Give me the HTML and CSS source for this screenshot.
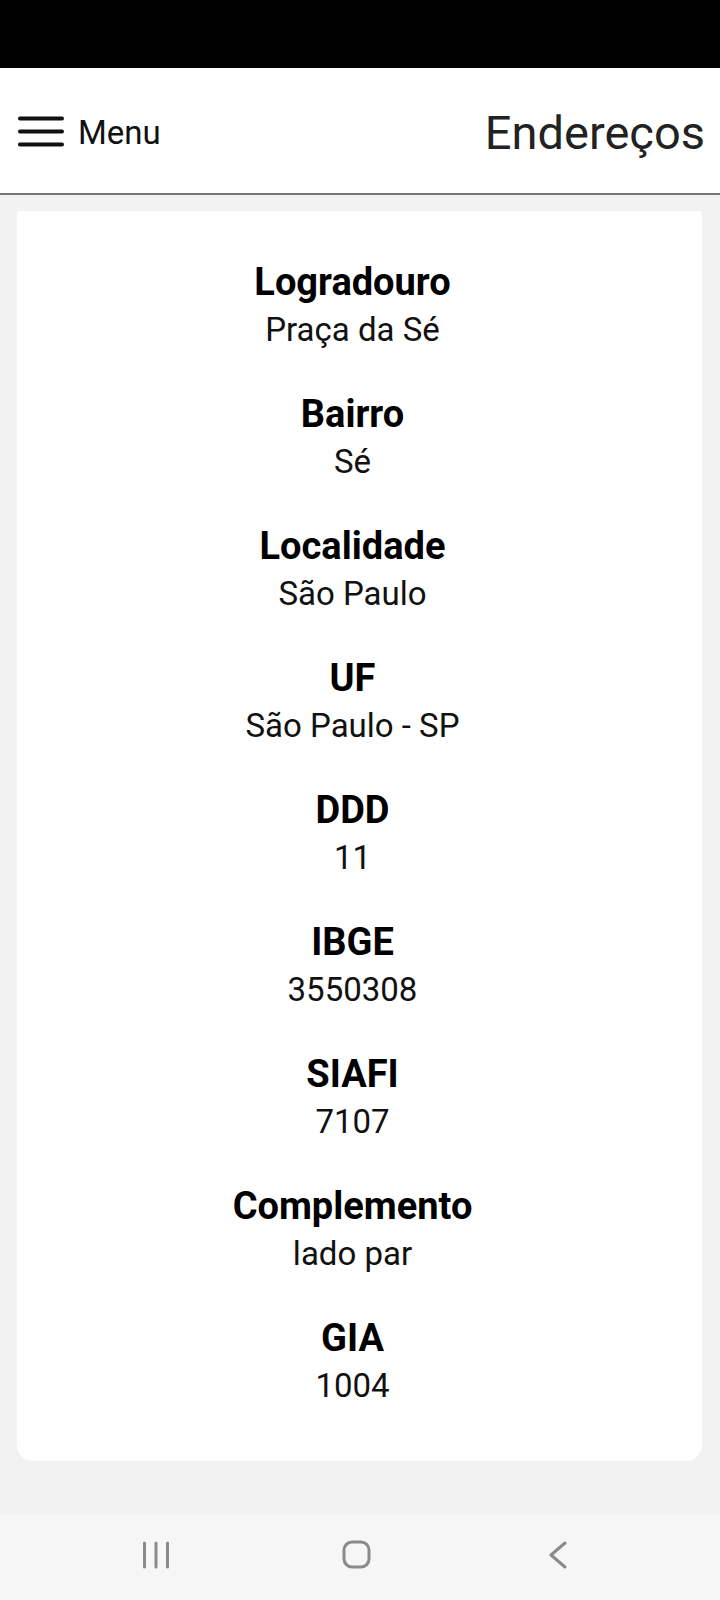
FILE: index.html
```html
<!DOCTYPE html>
<html lang="pt-BR">
<head>
<meta charset="utf-8">
<title>Endereços</title>
<link rel="stylesheet" href="styles.css">
</head>
<body>
<div class="screen">
  <div class="statusbar"></div>
  <header class="appbar">
    <div class="menu">
      <svg class="hamburger" width="46" height="31" viewBox="0 0 46 31">
        <g stroke="#111" stroke-width="3.8" stroke-linecap="round">
          <line x1="1.9" y1="2.5" x2="44.1" y2="2.5"/>
          <line x1="1.9" y1="15.5" x2="44.1" y2="15.5"/>
          <line x1="1.9" y1="28.5" x2="44.1" y2="28.5"/>
        </g>
      </svg>
      <span class="menu-label">Menu</span>
    </div>
    <h1 class="title">Endereços</h1>
  </header>
  <main class="content">
    <section class="card">
      <div class="field"><div class="label">Logradouro</div><div class="value">Praça da Sé</div></div>
      <div class="field"><div class="label">Bairro</div><div class="value">Sé</div></div>
      <div class="field"><div class="label">Localidade</div><div class="value">São Paulo</div></div>
      <div class="field"><div class="label">UF</div><div class="value">São Paulo - SP</div></div>
      <div class="field"><div class="label">DDD</div><div class="value">11</div></div>
      <div class="field"><div class="label">IBGE</div><div class="value">3550308</div></div>
      <div class="field"><div class="label">SIAFI</div><div class="value">7107</div></div>
      <div class="field"><div class="label">Complemento</div><div class="value">lado par</div></div>
      <div class="field"><div class="label">GIA</div><div class="value">1004</div></div>
    </section>
  </main>
  <nav class="navbar">
    <div class="nav-cell">
      <svg width="28" height="28" viewBox="0 0 28 28">
        <g stroke="#8a8a8a" stroke-width="3" stroke-linecap="round">
          <line x1="2.5" y1="2" x2="2.5" y2="26"/>
          <line x1="14" y1="2" x2="14" y2="26"/>
          <line x1="25.5" y1="2" x2="25.5" y2="26"/>
        </g>
      </svg>
    </div>
    <div class="nav-cell">
      <svg width="30" height="30" viewBox="0 0 30 30">
        <rect x="2" y="2" width="25" height="25" rx="8" ry="8" fill="none" stroke="#8a8a8a" stroke-width="3"/>
      </svg>
    </div>
    <div class="nav-cell">
      <svg width="20" height="28" viewBox="0 0 20 28">
        <polyline points="17,2 3,14 17,26" fill="none" stroke="#8a8a8a" stroke-width="3" stroke-linecap="round" stroke-linejoin="round"/>
      </svg>
    </div>
  </nav>
</div>
</body>
</html>
```

FILE: styles.css
```css
* { box-sizing: border-box; }

html, body {
  margin: 0;
  padding: 0;
  background: #f2f2f2;
}

body {
  font-family: Roboto, "Liberation Sans", Arial, sans-serif;
  color: #000;
}

.screen {
  width: 720px;
  height: 1600px;
  display: flex;
  flex-direction: column;
  background: #f2f2f2;
}

.statusbar {
  height: 68px;
  background: #000;
  flex: none;
}

.appbar {
  height: 127px;
  flex: none;
  background: #fff;
  border-bottom: 2px solid #777;
  display: flex;
  align-items: center;
  justify-content: space-between;
  padding: 0 15px 0 18px;
}

.menu {
  display: flex;
  align-items: center;
  gap: 14px;
}

.hamburger {
  display: block;
  margin-top: 2px;
}

.menu-label {
  font-size: 33px;
  line-height: 40px;
  color: #111;
  padding-top: 5px;
}

.title {
  margin: 0;
  font-size: 47px;
  font-weight: 400;
  line-height: 56px;
  color: #222;
  padding-top: 5px;
}

.content {
  flex: 1;
  padding: 16px 18px 0 17px;
}

.card {
  background: #fff;
  border-radius: 2px 2px 16px 16px;
  padding: 47px 14px 51px 0;
  display: flex;
  flex-direction: column;
  align-items: center;
  gap: 36px;
  text-align: center;
}

.field {
  display: flex;
  flex-direction: column;
  align-items: center;
}

.label {
  font-size: 38px;
  font-weight: 700;
  line-height: 48px;
  color: #000;
}

.value {
  font-size: 33px;
  font-weight: 400;
  line-height: 48px;
  color: #111;
}

.navbar {
  height: 86px;
  flex: none;
  background: #f6f6f6;
  display: flex;
  align-items: center;
  justify-content: center;
  padding-right: 6px;
  padding-bottom: 4px;
}

.nav-cell {
  width: 201px;
  display: flex;
  justify-content: center;
  align-items: center;
}

.nav-cell svg {
  display: block;
}
```
